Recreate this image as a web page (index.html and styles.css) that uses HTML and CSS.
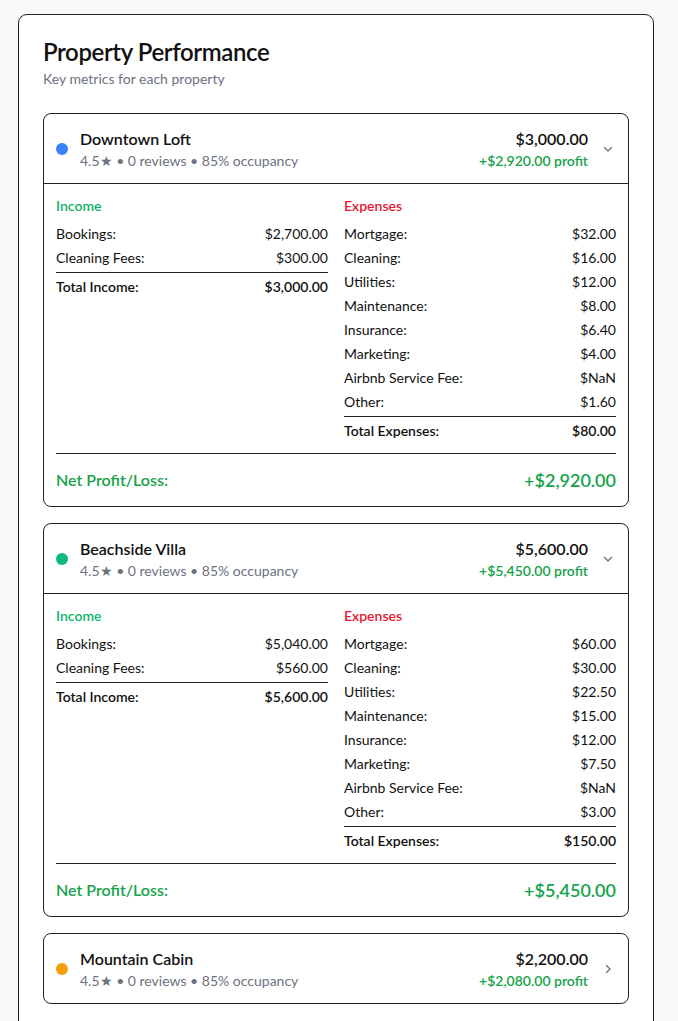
FILE: index.html
```html
<!DOCTYPE html>
<html lang="en">
<head>
<meta charset="utf-8">
<title>Property Performance</title>
<link rel="stylesheet" href="styles.css">
</head>
<body>
<main class="panel">
  <header class="panel-head">
    <h1 class="panel-title">Property Performance</h1>
    <p class="panel-sub">Key metrics for each property</p>
  </header>

  <section class="prop">
    <div class="prop-head">
      <span class="dot dot-blue"></span>
      <div class="prop-info">
        <div class="prop-name">Downtown Loft</div>
        <div class="prop-meta">4.5★ • 0 reviews • 85% occupancy</div>
      </div>
      <div class="prop-fig">
        <div class="prop-rev">$3,000.00</div>
        <div class="prop-profit">+$2,920.00 profit</div>
      </div>
      <svg class="chev" width="16" height="16" viewBox="0 0 16 16"><path d="M4.5 6.5 8 10l3.5-3.5" fill="none" stroke="#6b7280" stroke-width="1.4" stroke-linecap="round" stroke-linejoin="round"/></svg>
    </div>
    <div class="prop-body">
      <div class="cols">
        <div class="col">
          <div class="col-title income">Income</div>
          <div class="row"><span>Bookings:</span><span>$2,700.00</span></div>
          <div class="row"><span>Cleaning Fees:</span><span>$300.00</span></div>
          <div class="row total"><span>Total Income:</span><span>$3,000.00</span></div>
        </div>
        <div class="col">
          <div class="col-title expense">Expenses</div>
          <div class="row"><span>Mortgage:</span><span>$32.00</span></div>
          <div class="row"><span>Cleaning:</span><span>$16.00</span></div>
          <div class="row"><span>Utilities:</span><span>$12.00</span></div>
          <div class="row"><span>Maintenance:</span><span>$8.00</span></div>
          <div class="row"><span>Insurance:</span><span>$6.40</span></div>
          <div class="row"><span>Marketing:</span><span>$4.00</span></div>
          <div class="row"><span>Airbnb Service Fee:</span><span>$NaN</span></div>
          <div class="row"><span>Other:</span><span>$1.60</span></div>
          <div class="row total"><span>Total Expenses:</span><span>$80.00</span></div>
        </div>
      </div>
      <div class="net"><span class="net-label">Net Profit/Loss:</span><span class="net-val">+$2,920.00</span></div>
    </div>
  </section>

  <section class="prop">
    <div class="prop-head">
      <span class="dot dot-green"></span>
      <div class="prop-info">
        <div class="prop-name">Beachside Villa</div>
        <div class="prop-meta">4.5★ • 0 reviews • 85% occupancy</div>
      </div>
      <div class="prop-fig">
        <div class="prop-rev">$5,600.00</div>
        <div class="prop-profit">+$5,450.00 profit</div>
      </div>
      <svg class="chev" width="16" height="16" viewBox="0 0 16 16"><path d="M4.5 6.5 8 10l3.5-3.5" fill="none" stroke="#6b7280" stroke-width="1.4" stroke-linecap="round" stroke-linejoin="round"/></svg>
    </div>
    <div class="prop-body">
      <div class="cols">
        <div class="col">
          <div class="col-title income">Income</div>
          <div class="row"><span>Bookings:</span><span>$5,040.00</span></div>
          <div class="row"><span>Cleaning Fees:</span><span>$560.00</span></div>
          <div class="row total"><span>Total Income:</span><span>$5,600.00</span></div>
        </div>
        <div class="col">
          <div class="col-title expense">Expenses</div>
          <div class="row"><span>Mortgage:</span><span>$60.00</span></div>
          <div class="row"><span>Cleaning:</span><span>$30.00</span></div>
          <div class="row"><span>Utilities:</span><span>$22.50</span></div>
          <div class="row"><span>Maintenance:</span><span>$15.00</span></div>
          <div class="row"><span>Insurance:</span><span>$12.00</span></div>
          <div class="row"><span>Marketing:</span><span>$7.50</span></div>
          <div class="row"><span>Airbnb Service Fee:</span><span>$NaN</span></div>
          <div class="row"><span>Other:</span><span>$3.00</span></div>
          <div class="row total"><span>Total Expenses:</span><span>$150.00</span></div>
        </div>
      </div>
      <div class="net"><span class="net-label">Net Profit/Loss:</span><span class="net-val">+$5,450.00</span></div>
    </div>
  </section>

  <section class="prop">
    <div class="prop-head closed">
      <span class="dot dot-orange"></span>
      <div class="prop-info">
        <div class="prop-name">Mountain Cabin</div>
        <div class="prop-meta">4.5★ • 0 reviews • 85% occupancy</div>
      </div>
      <div class="prop-fig">
        <div class="prop-rev">$2,200.00</div>
        <div class="prop-profit">+$2,080.00 profit</div>
      </div>
      <svg class="chev" width="16" height="16" viewBox="0 0 16 16"><path d="M6.5 4.5 10 8l-3.5 3.5" fill="none" stroke="#6b7280" stroke-width="1.4" stroke-linecap="round" stroke-linejoin="round"/></svg>
    </div>
  </section>
</main>
</body>
</html>
```

FILE: styles.css
```css
* { box-sizing: border-box; }
html, body { margin: 0; }
body {
  background: #f9f9f9;
  font-family: Lato, "Open Sans", sans-serif;
  color: #111827;
  padding: 14px 24px 0 18px;
}
.panel {
  background: #fff;
  border: 1px solid #222;
  border-radius: 9px;
  padding: 21px 24px 24px;
  min-height: 1100px;
}
.panel-head { margin-bottom: 24px; }
.panel-title {
  margin: 0;
  font-size: 24px;
  font-weight: 600;
  line-height: 32px;
  letter-spacing: -0.4px;
  color: #111;
}
.panel-sub {
  margin: 1px 0 0;
  font-size: 14px;
  line-height: 20px;
  color: #6b7280;
}
.prop {
  border: 1px solid #222;
  border-radius: 8px;
  margin-bottom: 16px;
  overflow: hidden;
}
.prop-head {
  display: flex;
  align-items: center;
  padding: 13px 12px 12px 12px;
  border-bottom: 1px solid #222;
  height: 70px;
}
.prop-head.closed { border-bottom: none; height: 69px; }
.dot {
  width: 12px;
  height: 12px;
  border-radius: 50%;
  flex: none;
  margin-right: 12px;
}
.dot-blue { background: #3b82f6; }
.dot-green { background: #10b981; }
.dot-orange { background: #f59e0b; }
.prop-info { flex: 1; }
.prop-name {
  font-size: 16px;
  font-weight: 600;
  line-height: 24px;
  color: #111;
}
.prop-meta {
  font-size: 14px;
  line-height: 20px;
  color: #6b7280;
}
.prop-fig { text-align: right; }
.prop-rev {
  font-size: 16px;
  font-weight: 600;
  line-height: 24px;
  color: #111;
}
.prop-profit {
  font-size: 14px;
  font-weight: 600;
  line-height: 20px;
  color: #16a34a;
}
.chev { flex: none; margin-left: 12px; margin-right: 0; }
.prop-body { padding: 12px 12px 13px; }
.cols {
  display: grid;
  grid-template-columns: 1fr 1fr;
  column-gap: 16px;
  align-items: start;
}
.col-title {
  font-size: 14px;
  font-weight: 600;
  line-height: 20px;
  margin-bottom: 8px;
}
.income { color: #10b26c; }
.expense { color: #e5162f; }
.row {
  display: flex;
  justify-content: space-between;
  font-size: 14px;
  line-height: 20px;
  margin-bottom: 4px;
  color: #111;
}
.row.total {
  border-top: 1px solid #222;
  padding-top: 4px;
  margin-top: 2px;
  font-weight: 600;
  margin-bottom: 0;
}
.net {
  display: flex;
  justify-content: space-between;
  align-items: center;
  border-top: 1px solid #222;
  margin-top: 12px;
  padding-top: 13px;
  color: #16a34a;
  font-weight: 600;
}
.net-label { font-size: 16px; line-height: 24px; }
.net-val { font-size: 18px; line-height: 26px; }
```
